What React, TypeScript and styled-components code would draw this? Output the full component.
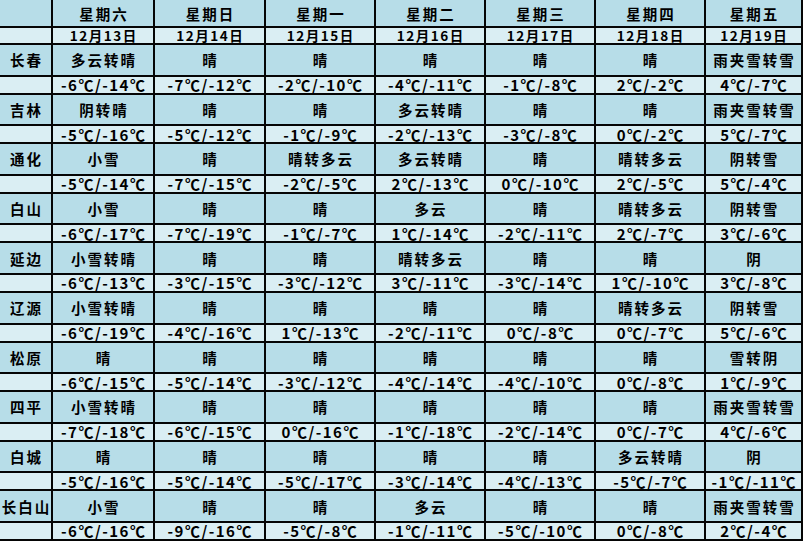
import React from "react";
import styled, { createGlobalStyle } from "styled-components";

const GlobalStyle = createGlobalStyle`
  html, body {
    margin: 0;
    padding: 0;
    background: #ffffff;
  }
  body {
    font-family: "Noto Sans CJK SC", "Noto Sans", sans-serif;
  }
`;

const Sheet = styled.div`
  display: grid;
  grid-template-columns: 51px 100px 109px 108px 108px 108px 108px 95px;
  grid-template-rows: 26px 15px repeat(10, 29.6px 16px);
  gap: 2px;
  width: 803px;
  padding: 0 2px 2px 0;
  box-sizing: border-box;
  background: #050505;
  color: #000000;
`;

const Cell = styled.div<{ $tone: "dark" | "light"; $kind?: "temp" | "date" | "text" }>`
  display: flex;
  align-items: center;
  justify-content: center;
  white-space: nowrap;
  background: ${(p) => (p.$tone === "dark" ? "#b7dde8" : "#daeef3")};
  font-weight: 700;
  line-height: 15px;
  font-size: ${(p) =>
    p.$kind === "date" ? "13.5px" : p.$kind === "temp" ? "15px" : "14.5px"};
  letter-spacing: ${(p) =>
    p.$kind === "date" ? "1.5px" : p.$kind === "temp" ? "1.5px" : "2px"};
  padding-left: ${(p) =>
    p.$kind === "date" ? "1.5px" : p.$kind === "temp" ? "1.5px" : "2px"};
`;

const days = [
  ["星期六", "12月13日"],
  ["星期日", "12月14日"],
  ["星期一", "12月15日"],
  ["星期二", "12月16日"],
  ["星期三", "12月17日"],
  ["星期四", "12月18日"],
  ["星期五", "12月19日"],
];

type Day = [string, number, number];

const cities: { name: string; days: Day[] }[] = [
  {
    name: "长春",
    days: [
      ["多云转晴", -6, -14],
      ["晴", -7, -12],
      ["晴", -2, -10],
      ["晴", -4, -11],
      ["晴", -1, -8],
      ["晴", 2, -2],
      ["雨夹雪转雪", 4, -7],
    ],
  },
  {
    name: "吉林",
    days: [
      ["阴转晴", -5, -16],
      ["晴", -5, -12],
      ["晴", -1, -9],
      ["多云转晴", -2, -13],
      ["晴", -3, -8],
      ["晴", 0, -2],
      ["雨夹雪转雪", 5, -7],
    ],
  },
  {
    name: "通化",
    days: [
      ["小雪", -5, -14],
      ["晴", -7, -15],
      ["晴转多云", -2, -5],
      ["多云转晴", 2, -13],
      ["晴", 0, -10],
      ["晴转多云", 2, -5],
      ["阴转雪", 5, -4],
    ],
  },
  {
    name: "白山",
    days: [
      ["小雪", -6, -17],
      ["晴", -7, -19],
      ["晴", -1, -7],
      ["多云", 1, -14],
      ["晴", -2, -11],
      ["晴转多云", 2, -7],
      ["阴转雪", 3, -6],
    ],
  },
  {
    name: "延边",
    days: [
      ["小雪转晴", -6, -13],
      ["晴", -3, -15],
      ["晴", -3, -12],
      ["晴转多云", 3, -11],
      ["晴", -3, -14],
      ["晴", 1, -10],
      ["阴", 3, -8],
    ],
  },
  {
    name: "辽源",
    days: [
      ["小雪转晴", -6, -19],
      ["晴", -4, -16],
      ["晴", 1, -13],
      ["晴", -2, -11],
      ["晴", 0, -8],
      ["晴转多云", 0, -7],
      ["阴转雪", 5, -6],
    ],
  },
  {
    name: "松原",
    days: [
      ["晴", -6, -15],
      ["晴", -5, -14],
      ["晴", -3, -12],
      ["晴", -4, -14],
      ["晴", -4, -10],
      ["晴", 0, -8],
      ["雪转阴", 1, -9],
    ],
  },
  {
    name: "四平",
    days: [
      ["小雪转晴", -7, -18],
      ["晴", -6, -15],
      ["晴", 0, -16],
      ["晴", -1, -18],
      ["晴", -2, -14],
      ["晴", 0, -7],
      ["雨夹雪转雪", 4, -6],
    ],
  },
  {
    name: "白城",
    days: [
      ["晴", -5, -16],
      ["晴", -5, -14],
      ["晴", -5, -17],
      ["晴", -3, -14],
      ["晴", -4, -13],
      ["多云转晴", -5, -7],
      ["阴", -1, -11],
    ],
  },
  {
    name: "长白山",
    days: [
      ["小雪", -6, -16],
      ["晴", -9, -16],
      ["晴", -5, -8],
      ["多云", -1, -11],
      ["晴", -5, -10],
      ["晴", 0, -8],
      ["雨夹雪转雪", 2, -4],
    ],
  },
];

const temp = (hi: number, lo: number) => `${hi}℃/${lo}℃`;

export default function App() {
  return (
    <>
      <GlobalStyle />
      <Sheet>
        <Cell $tone="dark" />
        {days.map(([week]) => (
          <Cell key={week} $tone="dark">
            {week}
          </Cell>
        ))}
        <Cell $tone="light" />
        {days.map(([week, date]) => (
          <Cell key={week + date} $tone="light" $kind="date">
            {date}
          </Cell>
        ))}
        {cities.map((city) => (
          <React.Fragment key={city.name}>
            <Cell $tone="dark">{city.name}</Cell>
            {city.days.map(([sky], i) => (
              <Cell key={"w" + i} $tone="dark">
                {sky}
              </Cell>
            ))}
            <Cell $tone="light" />
            {city.days.map(([, hi, lo], i) => (
              <Cell key={"t" + i} $tone="light" $kind="temp">
                {temp(hi, lo)}
              </Cell>
            ))}
          </React.Fragment>
        ))}
      </Sheet>
    </>
  );
}
